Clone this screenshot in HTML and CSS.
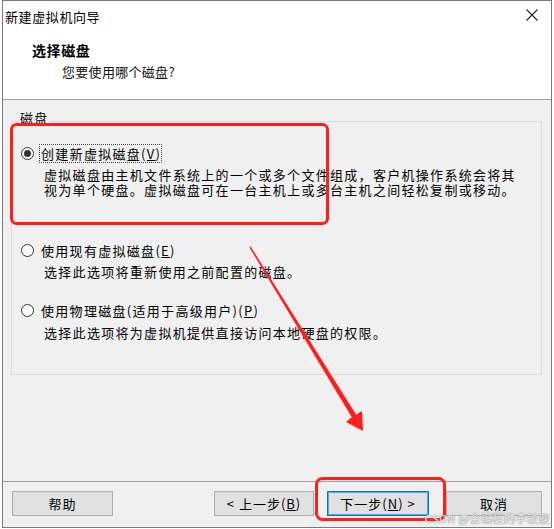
FILE: index.html
```html
<!DOCTYPE html>
<html lang="zh-CN">
<head>
<meta charset="utf-8">
<title>新建虚拟机向导</title>
<link rel="stylesheet" href="styles.css">
</head>
<body>
<div class="window">
  <div class="titlebar">
    <span class="title">新建虚拟机向导</span>
    <svg class="close" viewBox="0 0 12 12" width="12" height="12"><path d="M0.5 0.5 L11.5 11.5 M11.5 0.5 L0.5 11.5" stroke="#222" stroke-width="1.1" fill="none"/></svg>
  </div>
  <div class="header">
    <div class="h-title">选择磁盘</div>
    <div class="h-sub">您要使用哪个磁盘?</div>
  </div>
  <div class="body">
    <div class="group">
      <span class="legend">磁盘</span>
      <div class="opt opt1">
        <div class="opt-head"><span class="radio checked"></span><span class="opt-label focus">创建新虚拟磁盘(<u>V</u>)</span></div>
        <div class="opt-desc">虚拟磁盘由主机文件系统上的一个或多个文件组成，客户机操作系统会将其<br>视为单个硬盘。虚拟磁盘可在一台主机上或多台主机之间轻松复制或移动。</div>
      </div>
      <div class="opt opt2">
        <div class="opt-head"><span class="radio"></span><span class="opt-label">使用现有虚拟磁盘(<u>E</u>)</span></div>
        <div class="opt-desc">选择此选项将重新使用之前配置的磁盘。</div>
      </div>
      <div class="opt opt3">
        <div class="opt-head"><span class="radio"></span><span class="opt-label">使用物理磁盘(适用于高级用户)(<u>P</u>)</span></div>
        <div class="opt-desc">选择此选项将为虚拟机提供直接访问本地硬盘的权限。</div>
      </div>
    </div>
  </div>
  <div class="footer">
    <button class="btn btn-help">帮助</button>
    <button class="btn btn-back">&lt; 上一步(<u>B</u>)</button>
    <button class="btn btn-next default">下一步(<u>N</u>) &gt;</button>
    <button class="btn btn-cancel">取消</button>
  </div>
</div>
<svg class="annot" width="554" height="529" viewBox="0 0 554 529">
  <rect x="11.5" y="124.5" width="316" height="99" rx="5" fill="none" stroke="#ff1e1e" stroke-width="3"/>
  <rect x="316.5" y="478.5" width="128" height="41" rx="6" fill="none" stroke="#ff1e1e" stroke-width="3"/>
  <polygon points="250.6,246.6 356.2,414.7 362,411 363,431 346,422 351.8,417.3 249.4,247.4" fill="#ff1e1e"/>
</svg>
<div class="watermark">CSDN @会编程的李较瘦</div>
</body>
</html>
```

FILE: styles.css
```css
* {
  box-sizing: border-box;
}

html, body {
  margin: 0;
  padding: 0;
  background: #ffffff;
}

body {
  font-family: "Noto Sans CJK SC", "Noto Sans", sans-serif;
  width: 554px;
  height: 529px;
  position: relative;
  overflow: hidden;
  color: #000;
}

.window {
  margin-left: 2px;
  width: 550px;
  height: 528px;
  border: 1px solid #7a7a7a;
  background: #f0f0f0;
  display: flex;
  flex-direction: column;
}

.titlebar {
  height: 31px;
  flex: none;
  background: #fff;
  display: flex;
  align-items: center;
  justify-content: space-between;
  padding: 0 13px 0 2px;
  font-size: 13px;
  letter-spacing: 0.6px;
}

.close {
  margin-top: -3px;
}

.header {
  height: 68px;
  flex: none;
  background: #fff;
  border-bottom: 1px solid #a0a0a0;
  padding: 9px 0 0 29px;
}

.h-title {
  font-size: 14px;
  font-weight: bold;
  line-height: 18px;
  letter-spacing: 0.6px;
}

.h-sub {
  font-size: 13px;
  line-height: 18px;
  margin: 4px 0 0 30px;
  letter-spacing: 0.3px;
  color: #111;
}

.body {
  flex: 1;
  padding: 21px 9px 0 8px;
}

.group {
  position: relative;
  height: 254px;
  border: 1px solid #dcdcdc;
  padding: 22px 0 0 9px;
  font-size: 13px;
  letter-spacing: 1.3px;
}

.legend {
  position: absolute;
  top: -12px;
  left: 7px;
  line-height: 16px;
  padding: 0 1px;
  background: #f0f0f0;
}

.opt2 {
  margin-top: 44px;
}

.opt3 {
  margin-top: 22px;
}

.opt-head {
  display: flex;
  align-items: center;
  height: 19px;
}

.radio {
  flex: none;
  width: 13px;
  height: 13px;
  border: 1px solid #333;
  border-radius: 50%;
  background: #fff;
  position: relative;
}

.radio.checked::after {
  content: "";
  position: absolute;
  left: 2px;
  top: 2px;
  width: 7px;
  height: 7px;
  border-radius: 50%;
  background: #333;
}

.opt-label {
  margin-left: 5px;
  padding: 0 0 0 1px;
  line-height: 17px;
  border: 1px dotted transparent;
  white-space: nowrap;
}

.opt-label.focus {
  border-color: #444;
}

.opt-desc {
  margin: 4px 0 0 23px;
  line-height: 15px;
  white-space: nowrap;
}

.opt3 .opt-desc {
  margin-top: 5px;
}

.footer {
  height: 46px;
  flex: none;
  border-top: 1px solid #a0a0a0;
  display: flex;
  padding: 9px 9px 0 9px;
}

.btn {
  height: 25px;
  margin: 0;
  padding: 0;
  background: #e1e1e1;
  border: 1px solid #adadad;
  font-family: "Noto Sans CJK SC", "Noto Sans", sans-serif;
  font-size: 13px;
  letter-spacing: 1px;
  line-height: 21px;
  color: #000;
  text-align: center;
}

.btn-help {
  width: 101px;
}

.btn-back {
  width: 100px;
  margin-left: auto;
}

.btn-next {
  width: 102px;
  margin-left: 13px;
}

.btn-cancel {
  width: 96px;
  margin-left: 17px;
}

.btn.default {
  border-color: #0078d7;
  box-shadow: inset 0 0 0 1px #5aa6e6;
}

.annot {
  position: absolute;
  left: 0;
  top: 0;
  pointer-events: none;
}

.watermark {
  position: absolute;
  right: 4px;
  bottom: 4px;
  font-size: 11px;
  letter-spacing: 0.5px;
  line-height: 14px;
  color: rgba(250, 250, 250, 0.9);
  text-shadow: 0 0 1px rgba(110, 110, 110, 0.9), 0 0 1px rgba(110, 110, 110, 0.6);
}
```
